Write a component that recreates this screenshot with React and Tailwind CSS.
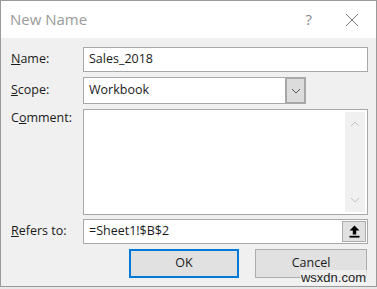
import React from "react";

const font = { fontFamily: '"Segoe UI", "Open Sans", "Noto Sans", sans-serif' };

function U({ children }) {
  return <span className="underline underline-offset-[1px] decoration-1">{children}</span>;
}

export default function App() {
  return (
    <div className="w-[377px] h-[289px] bg-[#e8e8e8] overflow-hidden" style={font}>
      <div className="relative w-[377px] h-[287px] border border-[#9a9a9a] bg-[#f0f0f0] flex flex-col">
        {/* title bar */}
        <div className="h-[37px] bg-white flex items-center shrink-0">
          <span className="ml-[9px] text-[15px] text-[#9a9a9a] leading-none">New Name</span>
          <span className="ml-auto mr-[33px] text-[15px] text-[#8a8a8a] leading-none">?</span>
          <svg width="14" height="14" viewBox="0 0 14 14" className="mr-[17px]">
            <path d="M1 1 L13 13 M13 1 L1 13" stroke="#777" strokeWidth="1" fill="none" />
          </svg>
        </div>

        <div className="flex flex-col pl-[10px] pr-[8px] pt-[9px] text-[12.5px] text-[#1a1a1a]">
          {/* Name */}
          <div className="flex items-center h-[25px]">
            <div className="w-[72px]"><U>N</U>ame:</div>
            <div className="flex-1 h-full bg-white border border-[#a8a8a8] flex items-center pl-[5px]">Sales_2018</div>
          </div>

          {/* Scope */}
          <div className="flex items-center h-[27px] mt-[5px]">
            <div className="w-[72px]"><U>S</U>cope:</div>
            <div className="w-[223px] h-full flex">
              <div className="flex-1 h-full bg-white border border-[#a8a8a8] border-r-0 flex items-center pl-[5px]">Workbook</div>
              <div className="w-[21px] h-full bg-[#dcdcdc] border-2 border-[#a8a8a8] flex items-center justify-center">
                <svg width="10" height="6" viewBox="0 0 10 6">
                  <path d="M1 1 L5 5 L9 1" stroke="#555" strokeWidth="1" fill="none" />
                </svg>
              </div>
            </div>
          </div>

          {/* Comment */}
          <div className="flex items-start h-[106px] mt-[5px]">
            <div className="w-[72px]">C<U>o</U>mment:</div>
            <div className="flex-1 h-full bg-white border border-[#a8a8a8] flex justify-end pr-[2px] py-[2px]">
              <div className="w-[20px] h-full bg-[#f0f0f0] flex flex-col items-center justify-between py-[9px]">
                <svg width="10" height="6" viewBox="0 0 10 6">
                  <path d="M1 5 L5 1 L9 5" stroke="#c2c2c2" strokeWidth="1" fill="none" />
                </svg>
                <svg width="10" height="6" viewBox="0 0 10 6">
                  <path d="M1 1 L5 5 L9 1" stroke="#c2c2c2" strokeWidth="1" fill="none" />
                </svg>
              </div>
            </div>
          </div>

          {/* Refers to */}
          <div className="flex items-center h-[25px] mt-[4px]">
            <div className="w-[72px]"><U>R</U>efers to:</div>
            <div className="flex-1 h-full bg-white border border-[#a8a8a8] flex items-center pl-[5px] pr-[1px]">
              <span className="flex-1">=Sheet1!$B$2</span>
              <div className="w-[24px] h-[21px] bg-[#e1e1e1] border border-[#adadad] flex items-center justify-center">
                <svg width="11" height="13" viewBox="0 0 11 13">
                  <path d="M5.5 0.5 L10.5 5.5 L7.2 5.5 L7.2 9.5 L3.8 9.5 L3.8 5.5 L0.5 5.5 Z" fill="#000" />
                  <rect x="0.5" y="10.8" width="10" height="1.8" fill="#000" />
                </svg>
              </div>
            </div>
          </div>

          {/* Buttons */}
          <div className="flex justify-end gap-[16px] mt-[5px] mr-[1px]">
            <div className="w-[110px] h-[29px] bg-[#e1e1e1] border-2 border-[#0078d7] flex items-center justify-center">OK</div>
            <div className="w-[112px] h-[29px] bg-[#e1e1e1] border border-[#adadad] flex items-center justify-center">Cancel</div>
          </div>
        </div>

        <div className="absolute right-[9px] bottom-[1px] text-[13px] leading-[15px] text-[#222] bg-[#f4f4f4]/70 px-[1px]" style={{ fontFamily: '"Liberation Sans", sans-serif' }}>
          wsxdn.com
        </div>
      </div>
    </div>
  );
}
